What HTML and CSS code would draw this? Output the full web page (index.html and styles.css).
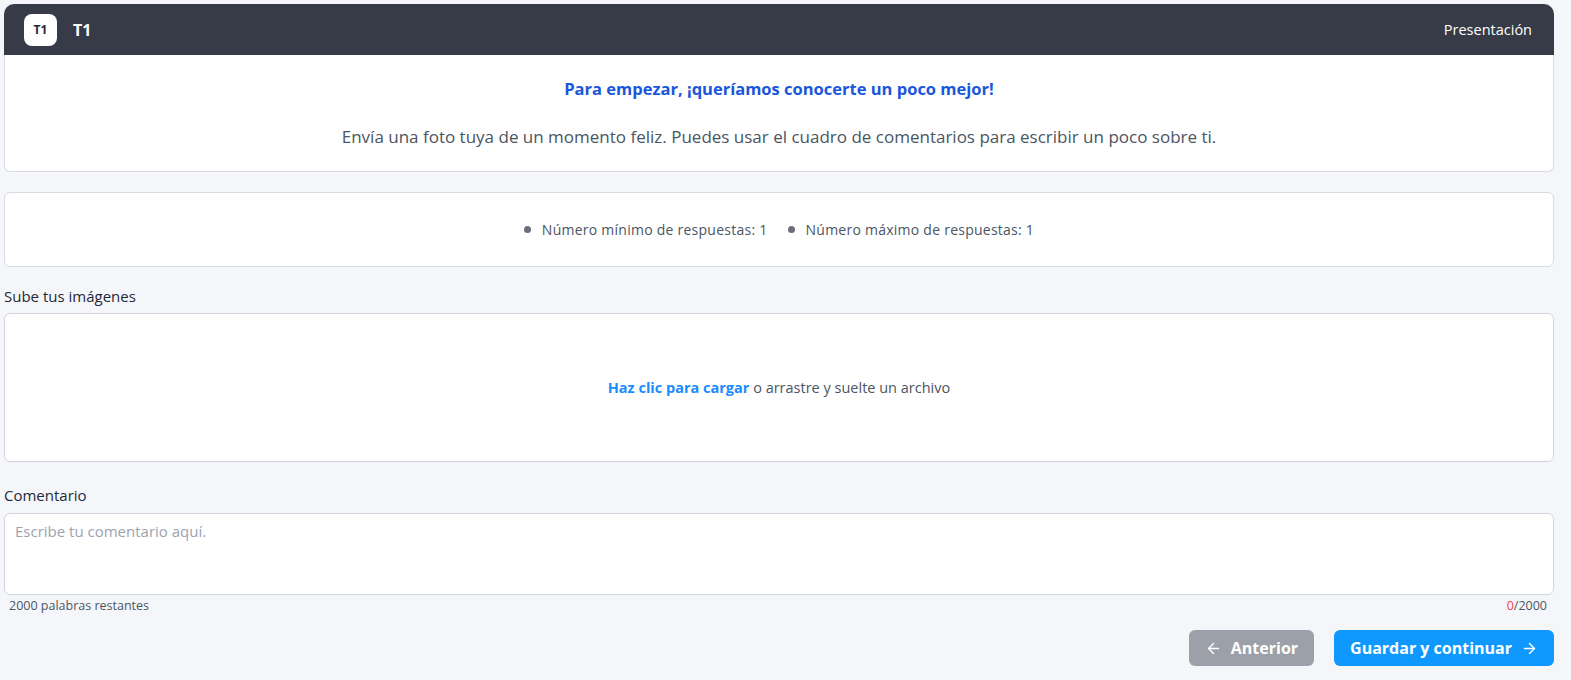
FILE: index.html
```html
<!DOCTYPE html>
<html lang="es">
<head>
    <meta charset="UTF-8">
    <title>Presentación</title>
    <link rel="stylesheet" href="styles.css">
</head>
<body>

    <div class="container">
        <!-- cabecera -->
        <div class="topbar">
            <div class="brand">
                <span class="brand-logo">T1</span>
                <span class="brand-name">T1</span>
            </div>
            <span class="topbar-title">Presentación</span>
        </div>

        <!-- intro -->
        <div class="intro-card">
            <h2 class="intro-title">Para empezar, ¡queríamos conocerte un poco mejor!</h2>
            <p class="intro-text">Envía una foto tuya de un momento feliz. Puedes usar el cuadro de comentarios para escribir un poco sobre ti.</p>
        </div>

        <!-- reglas -->
        <div class="rules-card">
            <ul class="rules">
                <li>Número mínimo de respuestas: 1</li>
                <li>Número máximo de respuestas: 1</li>
            </ul>
        </div>

        <label class="field-label label-upload">Sube tus imágenes</label>
        <div class="dropzone">
            <p><span class="dropzone-link">Haz clic para cargar</span> o arrastre y suelte un archivo</p>
        </div>

        <label class="field-label">Comentario</label>
        <textarea class="comment" placeholder="Escribe tu comentario aquí."></textarea>
        <div class="comment-meta">
            <span>2000 palabras restantes</span>
            <span><span class="count">0</span>/2000</span>
        </div>

        <div class="actions">
            <button class="btn btn-back">
                <svg width="17" height="17" viewBox="0 0 24 24" fill="none" stroke="currentColor" stroke-width="2" stroke-linecap="round" stroke-linejoin="round"><path d="M19 12H5"/><path d="M12 19l-7-7 7-7"/></svg>
                Anterior
            </button>
            <button class="btn btn-next">
                Guardar y continuar
                <svg width="17" height="17" viewBox="0 0 24 24" fill="none" stroke="currentColor" stroke-width="2" stroke-linecap="round" stroke-linejoin="round"><path d="M5 12h14"/><path d="M12 5l7 7-7 7"/></svg>
            </button>
        </div>
    </div>

</body>
</html>
```

FILE: styles.css
```css
body {
    margin: 0;
    padding: 0;
    background-color: #f5f6fa;
    font-family: "Open Sans", "Noto Sans", sans-serif;
    color: #374151;
}
.container {
    margin: 4px 17px 0 4px;
}
/* cabecera */
.topbar {
    height: 51px;
    background-color: #373b47;
    border-radius: 10px 10px 0 0;
    display: flex;
    align-items: center;
    justify-content: space-between;
    padding: 0 22px 0 20px;
}
.brand {
    display: flex;
    align-items: center;
    gap: 16px;
}
.brand-logo {
    width: 33px;
    height: 32px;
    background-color: white;
    border-radius: 8px;
    display: flex;
    align-items: center;
    justify-content: center;
    font-size: 12px;
    font-weight: 700;
    color: #1f2937;
}
.brand-name {
    color: white;
    font-size: 16px;
    font-weight: 700;
}
.topbar-title {
    color: white;
    font-size: 14.5px;
}
/* intro */
.intro-card {
    background-color: white;
    border: 1px solid #d8dbe2;
    border-top: none;
    border-radius: 0 0 6px 6px;
    text-align: center;
    padding: 22px 20px 23px;
}
.intro-title {
    margin: 0;
    font-size: 16.5px;
    font-weight: 700;
    color: #1a56db;
}
.intro-text {
    margin: 25px 0 0;
    font-size: 17px;
    color: #4b5563;
}
/* reglas */
.rules-card {
    margin-top: 20px;
    background-color: white;
    border: 1px solid #d8dbe2;
    border-radius: 6px;
    height: 73px;
    display: flex;
    align-items: center;
    justify-content: center;
}
.rules {
    display: flex;
    gap: 20px;
    margin: 0;
    padding: 0;
    list-style: none;
}
.rules li {
    font-size: 14px;
    letter-spacing: 0.25px;
    color: #4b5563;
    display: flex;
    align-items: center;
}
.rules li::before {
    content: "";
    width: 7px;
    height: 7px;
    border-radius: 50%;
    background-color: #6b6f7b;
    margin-right: 11px;
}
/* campos */
.field-label {
    display: block;
    margin: 23px 0 8px;
    font-size: 15px;
    color: #1f2937;
}
.label-upload {
    margin: 19px 0 7px;
}
.dropzone {
    height: 147px;
    background-color: white;
    border: 1px solid #d1d5db;
    border-radius: 6px;
    display: flex;
    align-items: center;
    justify-content: center;
    font-size: 14.5px;
    color: #4b5563;
}
.dropzone p {
    margin: 0;
}
.dropzone-link {
    color: #1a8cff;
    font-weight: 700;
}
.comment {
    display: block;
    width: 100%;
    box-sizing: border-box;
    height: 82px;
    resize: none;
    border: 1px solid #d1d5db;
    border-radius: 6px;
    padding: 7px 10px;
    font-family: inherit;
    font-size: 15px;
}
.comment::placeholder {
    color: #9ca3af;
}
.comment-meta {
    display: flex;
    justify-content: space-between;
    padding: 2px 7px 0 5px;
    font-size: 12.5px;
    color: #4b5563;
}
.count {
    color: #ef4444;
}
/* botones */
.actions {
    display: flex;
    justify-content: flex-end;
    gap: 20px;
    margin-top: 16px;
}
.btn {
    display: flex;
    align-items: center;
    gap: 9px;
    height: 36px;
    padding: 0 16px;
    border: none;
    border-radius: 6px;
    color: white;
    font-family: inherit;
    font-size: 16px;
    font-weight: 700;
    cursor: pointer;
}
.btn-back {
    background-color: #9ca0a8;
}
.btn-next {
    background-color: #0f99ff;
}
```
